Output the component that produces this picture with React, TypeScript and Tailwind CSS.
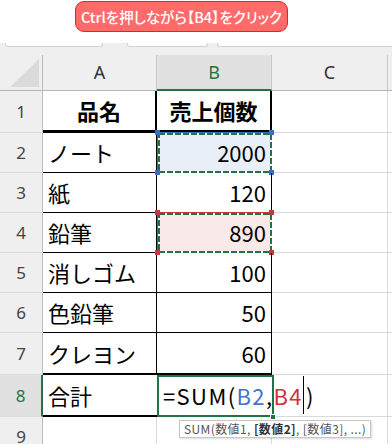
import React from 'react';

const jp = "font-['Noto_Sans_CJK_JP',sans-serif]";
const ui = "font-['Noto_Sans','Noto_Sans_CJK_JP',sans-serif]";

type RowData = {
  n: number;
  a: string;
  b: string;
  h: string;
  aCls: string;
  bCls: string;
  bold?: boolean;
  sel?: 'blue' | 'red';
};

const rows: RowData[] = [
  { n: 1, a: '品名', b: '売上個数', h: 'h-[42px]', aCls: 'border-r-2 border-b-[3px]', bCls: 'border-r-2 border-b-[3px]', bold: true },
  { n: 2, a: 'ノート', b: '2000', h: 'h-[40px]', aCls: 'border-r border-b', bCls: 'border-r border-b', sel: 'blue' },
  { n: 3, a: '紙', b: '120', h: 'h-[40px]', aCls: 'border-r border-b', bCls: 'border-r border-b' },
  { n: 4, a: '鉛筆', b: '890', h: 'h-[40px]', aCls: 'border-r border-b', bCls: 'border-r border-b', sel: 'red' },
  { n: 5, a: '消しゴム', b: '100', h: 'h-[40px]', aCls: 'border-r border-b', bCls: 'border-r border-b' },
  { n: 6, a: '色鉛筆', b: '50', h: 'h-[40px]', aCls: 'border-r border-b', bCls: 'border-r border-b' },
  { n: 7, a: 'クレヨン', b: '60', h: 'h-[42px]', aCls: 'border-r border-b-2', bCls: 'border-r border-b-2' },
];

function Selection({ color }: { color: 'blue' | 'red' }) {
  const line = color === 'blue' ? 'border-[#3a6fc6] bg-[#e9eff8]' : 'border-[#c9363f] bg-[#f9e9e9]';
  const dot = color === 'blue' ? 'bg-[#3a6fc6]' : 'bg-[#c9363f]';
  return (
    <div className={`absolute left-0 -right-px -top-px bottom-[-1px] border ${line}`}>
      <svg className="absolute left-0 top-0" width="114" height="40">
        <rect x="1" y="1" width="112" height="38" fill="none" stroke="#ffffff" strokeWidth="2" />
        <rect x="1" y="1" width="112" height="38" fill="none" stroke="#217346" strokeWidth="2" strokeDasharray="6 2" />
      </svg>
      <div className={`absolute -left-[3px] -top-[3px] w-[5px] h-[5px] ${dot}`} />
      <div className={`absolute -right-[3px] -top-[3px] w-[5px] h-[5px] ${dot}`} />
      <div className={`absolute -left-[3px] -bottom-[3px] w-[5px] h-[5px] ${dot}`} />
      <div className={`absolute -right-[3px] -bottom-[3px] w-[5px] h-[5px] ${dot}`} />
    </div>
  );
}

function RowHead({ n, h, active }: { n: number; h: string; active?: boolean }) {
  return (
    <div
      className={`${h} w-[43px] shrink-0 flex items-center justify-center border-b border-b-[#dcdcdc] text-[17px] ${ui} ${
        active
          ? 'bg-[#e1e1e1] border-r-2 border-r-[#217346] text-[#217346]'
          : 'bg-[#efefef] border-r border-r-[#bdbdbd] text-[#444]'
      }`}
    >
      {n}
    </div>
  );
}

export default function App() {
  return (
    <div className="relative w-[392px] h-[444px] overflow-hidden bg-white">
      {/* top hint area */}
      <div className="h-[43px] pt-px">
        <div className={`ml-[75px] w-[213px] h-[31px] rounded-[9px] border-[1.5px] border-[#ff1a1a] bg-[#ff6b6b] flex items-center justify-center whitespace-nowrap text-white text-[14.5px] font-medium [font-feature-settings:'palt'] ${jp}`}>
          Ctrlを押しながら【B4】をクリック
        </div>
      </div>
      <div className="h-[4px] flex bg-[#efefef]">
        <div className="ml-[5px] w-[98px] bg-white border-b border-x border-[#d2d2d2] rounded-b-[3px]" />
        <div className="ml-[24px] w-[81px] bg-white border-b border-x border-[#d2d2d2] rounded-b-[3px]" />
        <div className="ml-[9px] flex-1 bg-white border-b border-l border-[#d2d2d2] rounded-bl-[3px]" />
      </div>
      <div className="h-[8px] bg-[#efefef]" />

      {/* column header */}
      <div className={`flex h-[36px] bg-[#efefef] text-[18px] text-[#333] ${ui}`}>
        <div className="w-[43px] shrink-0 border-r border-b border-r-[#bdbdbd] border-b-[#b5b5b5]">
          <svg width="42" height="35">
            <polygon points="10,32 39,32 39,4" fill="#dadada" />
          </svg>
        </div>
        <div className="w-[114px] shrink-0 flex items-center justify-center border-r border-b border-r-[#c8c8c8] border-b-[#b5b5b5]">A</div>
        <div className="w-[115px] shrink-0 flex items-center justify-center bg-[#e1e1e1] text-[#217346] border-r border-b-2 border-r-[#c8c8c8] border-b-[#217346]">B</div>
        <div className="w-[116px] shrink-0 flex items-center justify-center border-r border-b border-r-[#c8c8c8] border-b-[#b5b5b5]">C</div>
        <div className="flex-1 border-b border-b-[#b5b5b5]" />
      </div>

      {/* rows */}
      <div className={`text-[22px] text-black ${jp}`}>
        {rows.map((r) => (
          <div key={r.n} className={`flex ${r.h}`}>
            <RowHead n={r.n} h={r.h} />
            <div
              className={`w-[114px] shrink-0 flex items-center border-black ${r.aCls} ${
                r.bold ? 'justify-center font-bold' : 'pl-[5px]'
              }`}
            >
              {r.a}
            </div>
            <div
              className={`relative w-[115px] shrink-0 flex items-center border-black ${r.bCls} ${
                r.bold ? 'justify-center font-bold' : 'justify-end pr-[5px]'
              }`}
            >
              {r.sel && <Selection color={r.sel} />}
              <span className="relative">{r.b}</span>
            </div>
            <div className="w-[116px] shrink-0 border-r border-b border-[#d9d9d9]" />
            <div className="flex-1 border-b border-[#d9d9d9]" />
          </div>
        ))}

        {/* row 8 */}
        <div className="flex h-[42px]">
          <RowHead n={8} h="h-[42px]" active />
          <div className="w-[114px] shrink-0 flex items-center pl-[5px] border-b-2 border-black">合計</div>
          <div className="relative z-10 w-[115px] shrink-0 flex items-center pl-[6px] whitespace-nowrap border-b-2 border-black">
            <div className="absolute left-0 -right-[2px] top-0 -bottom-[2px] border-2 border-[#217346]" />
            <div className="absolute -right-[4px] -bottom-[5px] w-[6px] h-[6px] bg-[#217346] border border-white" />
            <span className="relative flex items-center tracking-[1.4px]">
              =SUM(<span className="text-[#3f74cf]">B2</span>,<span className="text-[#d0323f]">B4</span>
              <span className="inline-block w-px h-[38px] bg-black mr-[2px]" />)
            </span>
          </div>
          <div className="w-[116px] shrink-0 border-r border-b border-[#d9d9d9]" />
          <div className="flex-1 border-b border-[#d9d9d9]" />
        </div>

        {/* row 9 */}
        <div className="flex h-[40px]">
          <RowHead n={9} h="h-[40px]" />
          <div className="w-[114px] shrink-0 border-r border-b border-[#d9d9d9]" />
          <div className="w-[115px] shrink-0 border-r border-b border-[#d9d9d9]" />
          <div className="w-[116px] shrink-0 border-r border-b border-[#d9d9d9]" />
          <div className="flex-1 border-b border-[#d9d9d9]" />
        </div>
      </div>

      {/* function tooltip */}
      <div className={`absolute left-[179px] top-[420px] h-[18px] px-[4px] flex items-center bg-white border border-[#c6c6c6] shadow-[1px_1px_2px_rgba(0,0,0,0.15)] text-[12px] tracking-[0.4px] text-[#555] whitespace-nowrap ${jp}`}>
        SUM(数値1,&nbsp;<b className="text-[#333]">[数値2]</b>, [数値3], ...)
      </div>
    </div>
  );
}
